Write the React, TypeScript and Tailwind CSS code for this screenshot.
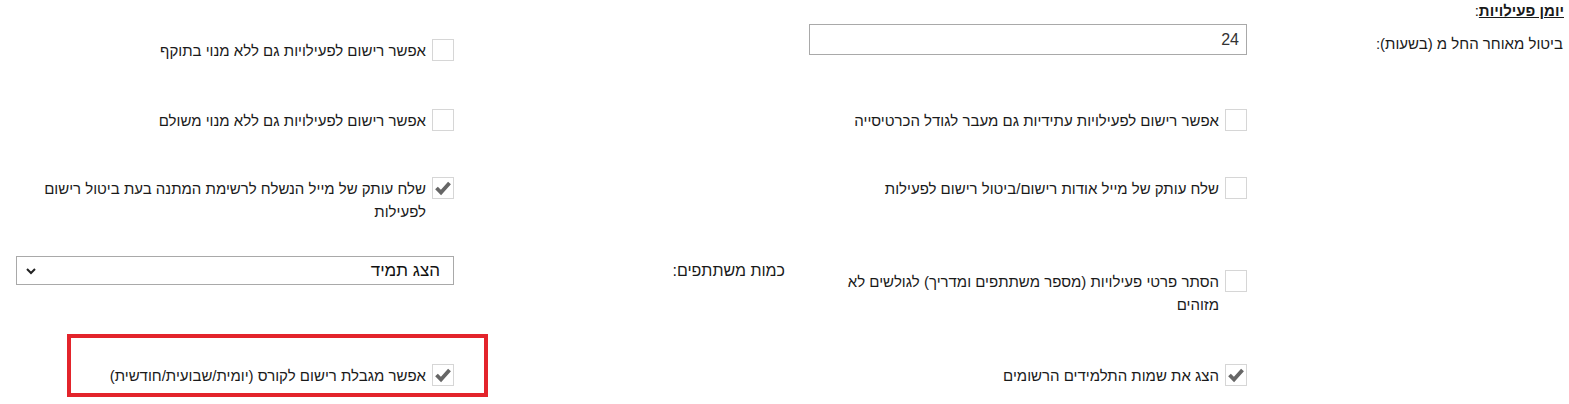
import React from "react"

function Box({ checked }: { checked?: boolean }) {
  return (
    <div className="w-[22px] h-[22px] shrink-0 border border-[#d6d6d6] bg-white flex items-center justify-center">
      {checked && (
        <svg width="18" height="16" viewBox="0 0 18 16">
          <path d="M2.5 8 L7 12.5 L15.5 3" fill="none" stroke="#666" strokeWidth="3.8" strokeLinejoin="miter" />
        </svg>
      )}
    </div>
  )
}

function Check({ label, checked, className = "" }: { label: string; checked?: boolean; className?: string }) {
  return (
    <div className={`flex items-start gap-[6px] ${className}`}>
      <Box checked={checked} />
      <span className="max-w-[400px] leading-[23px]">{label}</span>
    </div>
  )
}

export default function App() {
  return (
    <div
      dir="rtl"
      className="relative w-[1569px] h-[404px] bg-white text-[15px] text-[#1a1a1a] overflow-hidden"
      style={{ fontFamily: '"Liberation Sans", Arial, sans-serif' }}
    >
      {/* כותרת */}
      <div className="h-[24px] pr-[5px] pt-[1px] leading-[20px]">
        <span className="font-bold underline">יומן פעילויות</span>:
      </div>

      <div className="grid grid-cols-[316px_438px_355px_438px] grid-rows-[85px_68px_79px_108px_40px] pr-[6px]">
        {/* שורה 1 */}
        <div className="mt-[10px] leading-[20px]">ביטול מאוחר החל מ (בשעות):</div>
        <div>
          <input
            readOnly
            value="24"
            className="w-[438px] h-[31px] border border-[#a9a9a9] px-[7px] text-right text-[16px] text-[#333] outline-none"
          />
        </div>
        <div />
        <Check className="mt-[15px]" label="אפשר רישום לפעילויות גם ללא מנוי בתוקף" />

        {/* שורה 2 */}
        <div />
        <Check label="אפשר רישום לפעילויות עתידיות גם מעבר לגודל הכרטיסייה" />
        <div />
        <Check label="אפשר רישום לפעילויות גם ללא מנוי משולם" />

        {/* שורה 3 */}
        <div />
        <Check label="שלח עותק של מייל אודות רישום/ביטול רישום לפעילות" />
        <div />
        <Check checked label="שלח עותק של מייל הנשלח לרשימת המתנה בעת ביטול רישום לפעילות" />

        {/* שורה 4 */}
        <div />
        <Check className="mt-[14px]" label="הסתר פרטי פעילויות (מספר משתתפים ומדריך) לגולשים לא מזוהים" />
        <div className="mt-[5px] pr-[24px] leading-[20px] text-[16px]">כמות משתתפים:</div>
        <div className="w-[438px] h-[29px] border border-[#a9a9a9] flex items-center justify-between pr-[13px] pl-[8px]">
          <span className="text-[17px] text-[#111]">הצג תמיד</span>
          <svg width="12" height="8" viewBox="0 0 12 8">
            <path d="M2 2 L6 6 L10 2" fill="none" stroke="#222" strokeWidth="2" />
          </svg>
        </div>

        {/* שורה 5 */}
        <div />
        <Check checked label="הצג את שמות התלמידים הרשומים" />
        <div />
        <Check checked label="אפשר מגבלת רישום לקורס (יומית/שבועית/חודשית)" />
      </div>

      {/* סימון אדום */}
      <div className="absolute left-[67px] top-[334px] w-[421px] h-[63px] border-4 border-[#e3242b]" />
    </div>
  )
}
